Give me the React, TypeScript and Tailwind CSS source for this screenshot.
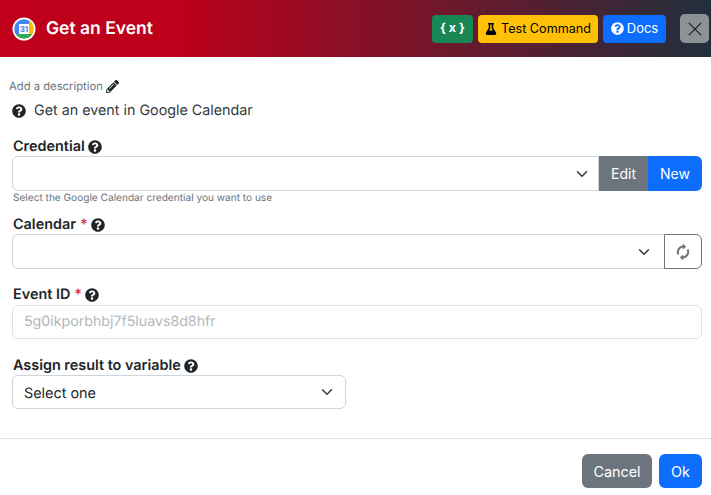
import { FaQuestionCircle, FaPencilAlt, FaFlask } from "react-icons/fa";

function Chevron({ className }: { className?: string }) {
  return (
    <svg viewBox="0 0 16 16" width="16" height="16" className={className} fill="none" stroke="#343a40" strokeWidth="2" strokeLinecap="round" strokeLinejoin="round">
      <path d="m2 5 6 6 6-6" />
    </svg>
  );
}

function Logo() {
  return (
    <svg viewBox="0 0 24 24" width="24" height="24">
      <circle cx="12" cy="12" r="11.5" fill="#fff" />
      <clipPath id="c"><circle cx="12" cy="12" r="9.8" /></clipPath>
      <g clipPath="url(#c)">
        <rect x="0" y="0" width="24" height="7" fill="#4285f4" />
        <rect x="0" y="7" width="7" height="10" fill="#4285f4" />
        <rect x="17" y="0" width="7" height="17" fill="#fbbc04" />
        <rect x="0" y="17" width="24" height="7" fill="#34a853" />
        <rect x="7" y="7" width="10" height="10" fill="#fff" />
      </g>
      <text x="12" y="15.2" textAnchor="middle" fontSize="8" fontWeight="700" fill="#4285f4" fontFamily="Inter, sans-serif">31</text>
    </svg>
  );
}

function SyncIcon() {
  return (
    <svg viewBox="0 0 14 18" width="14" height="18" fill="none" stroke="#6c757d" strokeWidth="2">
      <path d="M2.4 11.5A5.5 5.5 0 0 1 7.5 3.6" />
      <path d="M11.6 6.5A5.5 5.5 0 0 1 6.5 14.4" />
      <path d="M6.8 0.6 10.2 3.7 6.8 6.4z" fill="#6c757d" stroke="none" />
      <path d="M7.2 11.6 3.8 14.3 7.2 17.4z" fill="#6c757d" stroke="none" />
    </svg>
  );
}

function Label({ text, required }: { text: string; required?: boolean }) {
  return (
    <div className="flex items-center h-[20px] pt-[2px] pl-px text-[14.4px] leading-[18px] font-semibold text-[#212529]">
      <span>{text}</span>
      {required && <span className="ml-1 text-[#dc3545]">*</span>}
      <FaQuestionCircle className="ml-[3px] text-[14px] text-[#212529]" />
    </div>
  );
}

export default function App() {
  return (
    <div className="w-[711px] h-[495px] overflow-hidden bg-white font-['Inter',sans-serif] text-[#212529] [text-rendering:geometricPrecision]">
      <header className="h-[57px] flex items-center pl-[12px] pr-[2px] bg-[linear-gradient(90deg,#c0001a_0%,#bd001b_25%,#212f3c_100%)]">
        <Logo />
        <h1 className="ml-[10px] text-[17.5px] font-semibold text-white leading-none">Get an Event</h1>
        <div className="ml-auto flex items-center">
          <button className="h-[28px] w-[41px] rounded-[4px] bg-[#198754] text-white text-[12.5px] font-bold">{"{ x }"}</button>
          <button className="ml-[5px] h-[28px] w-[120px] rounded-[4px] bg-[#ffc107] text-black text-[12.6px] pt-px flex items-center justify-center gap-[4px]">
            <FaFlask className="text-[12px]" />Test Command
          </button>
          <button className="ml-[5px] h-[28px] w-[63px] rounded-[4px] bg-[#0d6efd] text-white text-[13px] flex items-center justify-center gap-[3px]">
            <FaQuestionCircle className="text-[13px]" />Docs
          </button>
          <button className="ml-[14px] w-[29px] h-[29px] rounded-[5px] bg-[#8d9296] flex items-center justify-center">
            <svg viewBox="0 0 16 16" width="14" height="14" fill="none" stroke="#212529" strokeWidth="1.6"><path d="M1 1l14 14M15 1l-14 14" /></svg>
          </button>
        </div>
      </header>

      <main className="pl-[12px] pr-[9px] pt-[21px]">
        <div className="flex items-center -ml-[3px] h-[16px] text-[11.25px] text-[#6c757d]">
          Add a description<FaPencilAlt className="ml-[3px] text-[13px] text-[#212529]" />
        </div>
        <div className="mt-[7px] flex items-center h-[18px] pt-[2px] text-[14.3px] leading-[16px] text-[#343a40]">
          <FaQuestionCircle className="text-[14px] text-[#212529] mr-[8px]" />Get an event in Google Calendar
        </div>

        <div className="mt-[17px]"><Label text="Credential" /></div>
        <div className="flex h-[35px]">
          <div className="flex-1 flex items-center justify-end pr-[10px] border border-[#ced4da] rounded-l-[6px]"><Chevron className="w-[12px] h-[12px]" /></div>
          <button className="w-[49px] bg-[#6c757d] text-white text-[14px]">Edit</button>
          <button className="w-[54px] bg-[#0d6efd] text-white text-[14px] rounded-r-[6px]">New</button>
        </div>
        <p className="h-[15px] text-[10.1px] leading-[15px] pl-px text-[#6c757d]">Select the Google Calendar credential you want to use</p>

        <div className="mt-[8px]"><Label text="Calendar" required /></div>
        <div className="flex h-[35px]">
          <div className="flex-1 flex items-center justify-end pr-[14px] border border-[#ced4da] rounded-l-[6px]"><Chevron className="w-[12px] h-[12px]" /></div>
          <button className="w-[38px] -ml-px border border-[#6c757d] rounded-r-[6px] flex items-center justify-center">
            <SyncIcon />
          </button>
        </div>

        <div className="mt-[15px]"><Label text="Event ID" required /></div>
        <div className="mt-[1px] h-[34px] flex items-center pl-[11px] border border-[#dee2e6] rounded-[6px] text-[14.2px] text-[#b3b7bb]">5g0ikporbhbj7f5luavs8d8hfr</div>

        <div className="mt-[16px]"><Label text="Assign result to variable" /></div>
        <div className="w-[334px] h-[34px] flex items-center justify-between pl-[11px] pr-[12px] pt-[3px] border border-[#ced4da] rounded-[6px] text-[14.4px] text-[#212529]">
          Select one<Chevron className="w-[12px] h-[12px] -mt-[3px]" />
        </div>
      </main>

      <footer className="mt-[29px] border-t border-[#dee2e6] flex justify-end gap-[7px] pt-[15px] pr-[9px]">
        <button className="w-[70px] h-[34px] pt-px rounded-[6px] bg-[#6c757d] text-white text-[14.4px]">Cancel</button>
        <button className="w-[43px] h-[34px] pt-px rounded-[6px] bg-[#0d6efd] text-white text-[14.4px]">Ok</button>
      </footer>
    </div>
  );
}
